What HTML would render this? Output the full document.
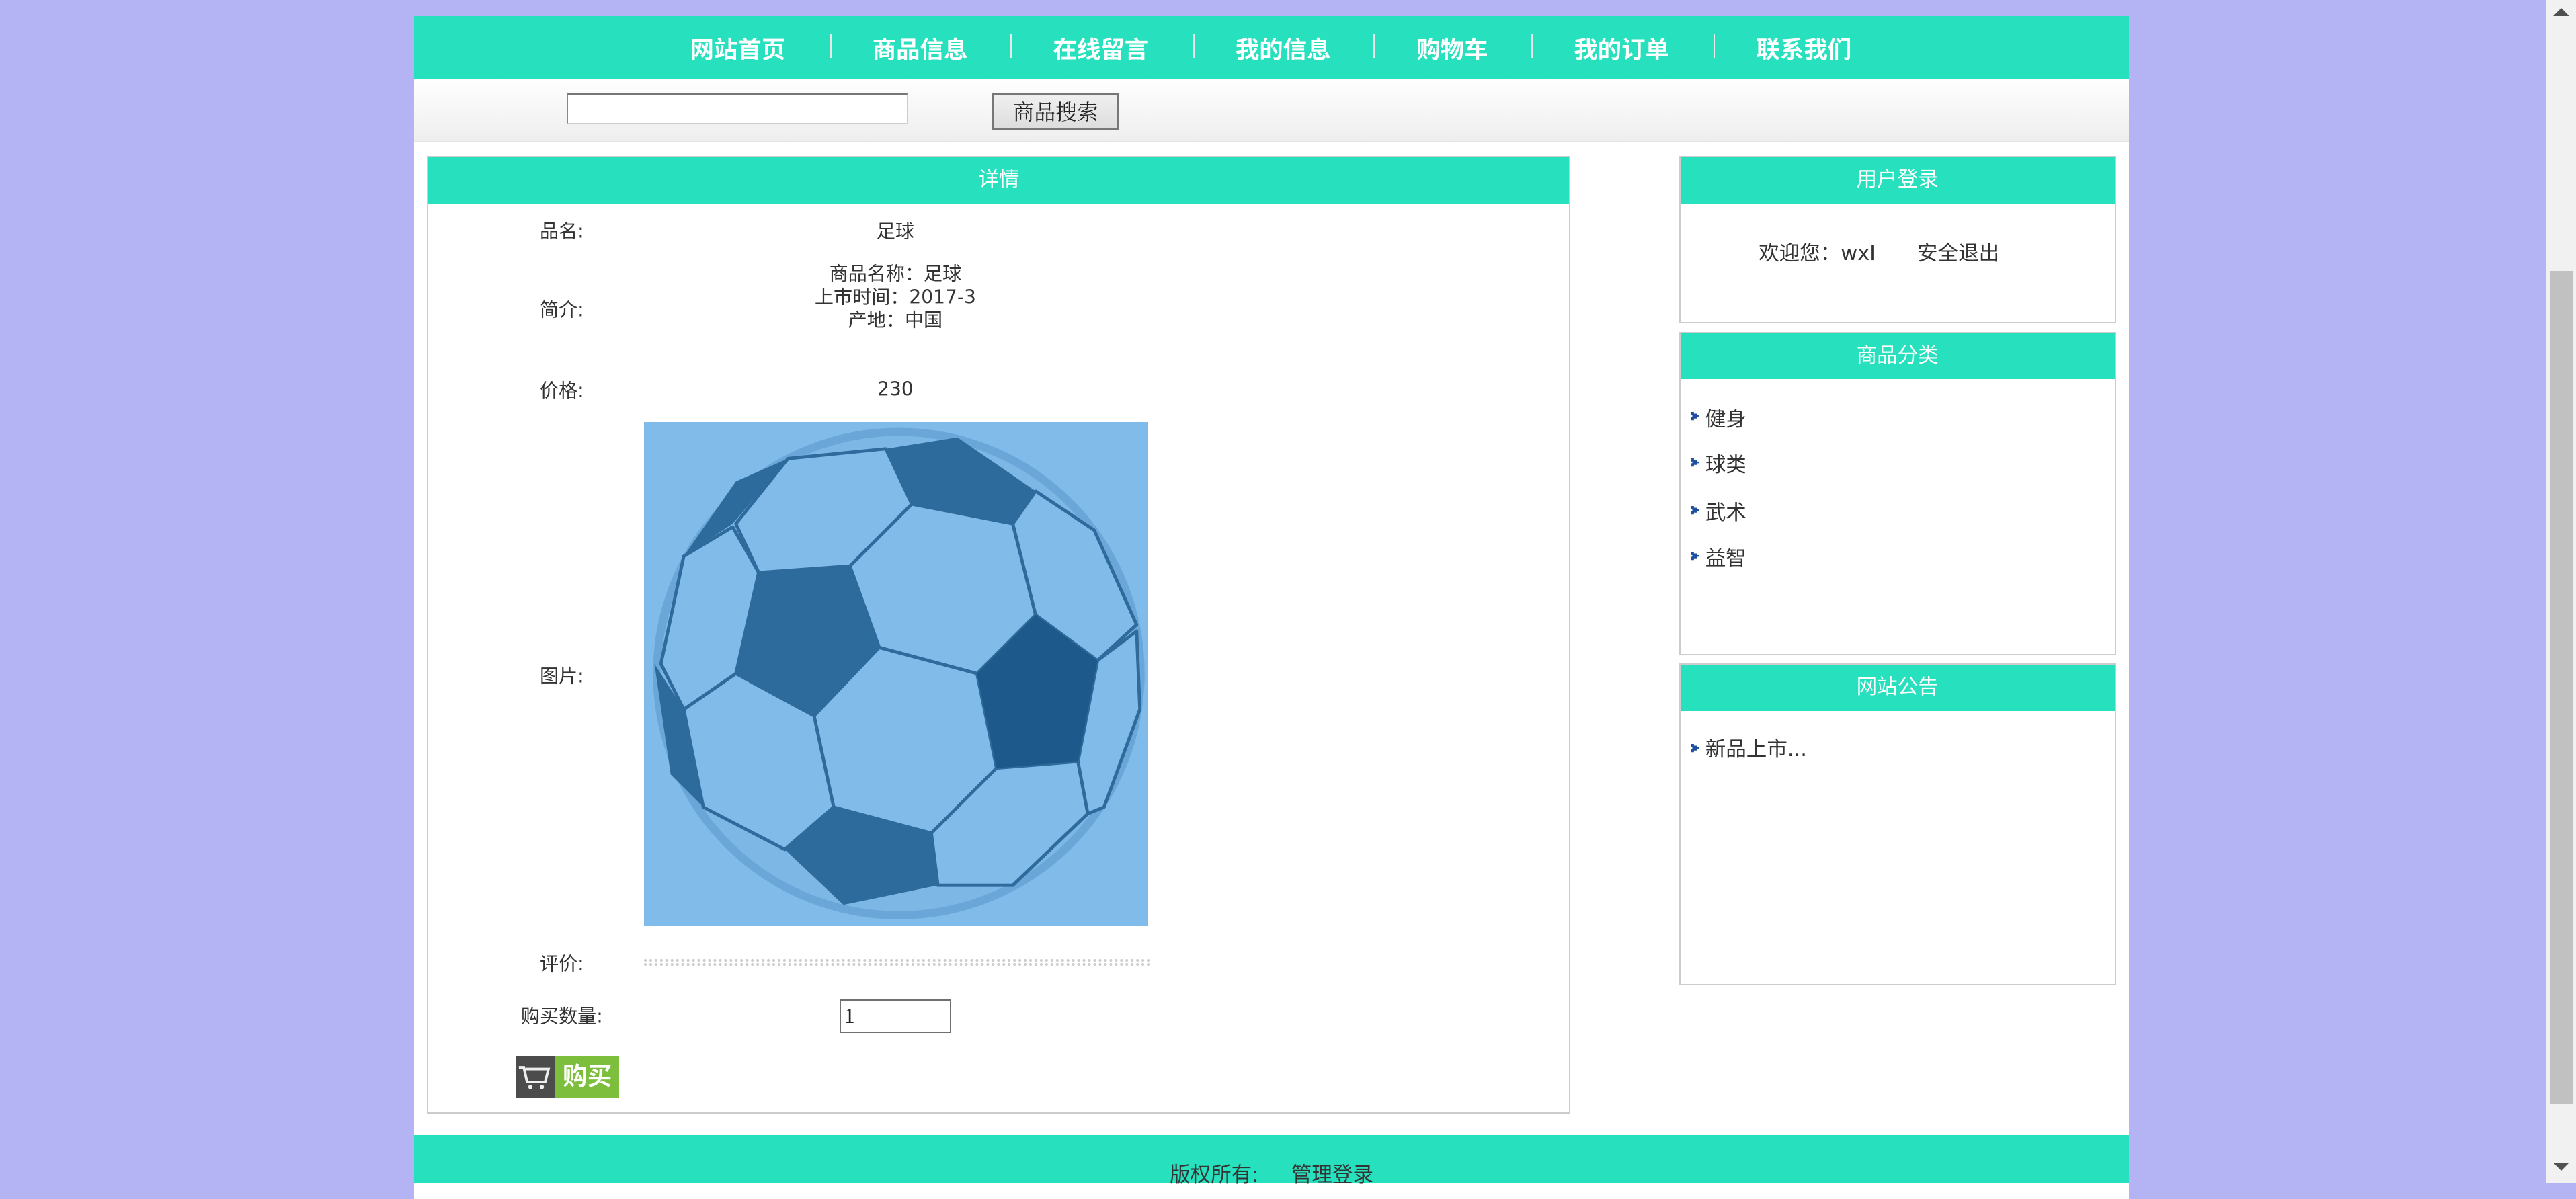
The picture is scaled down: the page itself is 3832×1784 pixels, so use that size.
<!DOCTYPE html>
<html><head><meta charset="utf-8"><style>
html,body{margin:0;padding:0}
body{width:1568px;height:720px;zoom:2.44388;background:#b4b4f4;position:relative;overflow:hidden;font-family:"DejaVu Sans","Noto Sans CJK SC",sans-serif;font-size:11.5px;color:#333}
.a{position:absolute}
#wrap{left:252px;top:10px;width:1044px;height:720px;background:#fff}
#nav{left:252px;top:10px;width:1044px;height:38px;background:#27e0bd}
.ni{top:19px;color:#fff;font-weight:bold;font-size:14.5px;transform:translateX(-50%);white-space:nowrap}
.sep{top:21px;width:1px;height:14px;background:#e8e8e8}
#sb{left:252px;top:48px;width:1044px;height:38px;background:linear-gradient(#fff,#eee);border-bottom:1px solid #e4e4e4}
.panel{border:1px solid #ccc;box-sizing:border-box;background:#fff}
.hd{left:0;top:0;right:0;height:28px;background:#27e0bd;color:#fff;text-align:center;line-height:28px;font-size:12.5px}
.c{transform:translate(-50%,-50%);white-space:nowrap}
.li{font-size:12.5px;color:#333}
</style></head><body>
<div class="a" id="wrap"></div>
<div class="a" id="nav"></div>
<div class="a ni" style="left:449px">网站首页</div>
<div class="a sep" style="left:505px"></div>
<div class="a ni" style="left:560px">商品信息</div>
<div class="a sep" style="left:615px"></div>
<div class="a ni" style="left:670px">在线留言</div>
<div class="a sep" style="left:726px"></div>
<div class="a ni" style="left:781px">我的信息</div>
<div class="a sep" style="left:836px"></div>
<div class="a ni" style="left:884px">购物车</div>
<div class="a sep" style="left:932px"></div>
<div class="a ni" style="left:987px">我的订单</div>
<div class="a sep" style="left:1043px"></div>
<div class="a ni" style="left:1098px">联系我们</div>
<div class="a" id="sb"></div>
<div class="a" style="left:345px;top:57px;width:206px;height:17px;background:#fff;border:1px solid #ccc;border-top-color:#777;border-left-color:#888"></div>
<div class="a" style="left:604px;top:57px;width:77px;height:22px;background:linear-gradient(#f0f0f0,#ddd);border:1px solid #777;box-sizing:border-box;font-family:'Noto Serif CJK SC',serif;font-size:13px;text-align:center;line-height:20px;color:#222">商品搜索</div>

<div class="a panel" style="left:260px;top:95px;width:696px;height:583px">
<div class="a hd">详情</div></div>
<div class="a c" style="left:342px;top:140px">品名:</div>
<div class="a c" style="left:545px;top:140px">足球</div>
<div class="a c" style="left:342px;top:188px">简介:</div>
<div class="a c" style="left:545px;top:181px;text-align:center;line-height:14px">商品名称：足球<br>上市时间：2017-3<br>产地：中国</div>
<div class="a c" style="left:342px;top:237px">价格:</div>
<div class="a c" style="left:545px;top:237px">230</div>
<div class="a c" style="left:342px;top:411px">图片:</div>
<svg class="a" style="left:392px;top:257px" width="307" height="307" viewBox="18 18 1548 1548">
<rect x="0" y="0" width="2300" height="2300" fill="#80bbea"/>
<circle cx="800" cy="790" r="742" fill="#7db7e6"/>
<circle cx="800" cy="790" r="742" fill="none" stroke="#6aa6d8" stroke-width="25"/>
<g fill="#80bbea" stroke="#2f6a9c" stroke-width="10" stroke-linejoin="round">
<polygon points="300,330 460,130 760,100 840,270 650,460 370,480"/>
<polygon points="650,460 840,270 1150,330 1220,610 1040,790 740,710"/>
<polygon points="540,920 740,710 1040,790 1100,1080 900,1280 600,1200"/>
<polygon points="140,900 300,790 540,920 600,1200 450,1330 200,1200"/>
<polygon points="70,760 140,430 290,340 370,480 300,790 140,900"/>
<polygon points="1150,330 1220,230 1400,350 1530,640 1410,750 1220,610"/>
<polygon points="900,1280 1100,1080 1350,1060 1380,1220 1150,1440 920,1440"/>
<polygon points="1410,750 1530,660 1540,900 1430,1200 1380,1220 1350,1060"/>
</g>
<g fill="#2d6b9d">
<polygon points="760,100 980,65 1220,230 1150,330 840,270"/>
<polygon points="370,480 650,460 740,710 540,920 300,790"/>
<polygon points="450,1330 600,1200 900,1280 920,1440 630,1500"/>
<polygon points="50,760 140,900 200,1200 100,1100"/>
<polygon points="140,430 290,330 460,130 300,200"/>
</g>
<polygon fill="#1d5a8b" points="1040,790 1220,610 1410,750 1350,1060 1100,1080"/>
</svg>
<div class="a c" style="left:342px;top:586px">评价:</div>
<div class="a" style="left:392px;top:584px;width:308px;height:4px;border-top:2px dotted #ccc;border-bottom:2px dotted #ccc;box-sizing:border-box"></div>
<div class="a c" style="left:342px;top:618px">购买数量:</div>
<div class="a" style="left:511px;top:608px;width:68px;height:21px;border:1px solid #707070;border-top-width:2px;box-sizing:border-box;font-family:'Liberation Serif',serif;font-size:13px;line-height:18px;padding-left:2px;color:#222">1</div>
<div class="a" style="left:314px;top:643px;width:24px;height:25px;background:#4c4c4c"></div>
<svg class="a" style="left:314px;top:643px" width="24" height="25" viewBox="0 0 24 25"><path d="M2 7h3l2 9h11l2-8H6" fill="none" stroke="#eee" stroke-width="1.6"/><circle cx="9" cy="19" r="1.3" fill="#eee"/><circle cx="16" cy="19" r="1.3" fill="#eee"/></svg>
<div class="a" style="left:338px;top:643px;width:39px;height:25px;background:#7dbf3c;color:#fff;font-weight:bold;font-size:15px;line-height:25px;text-align:center">购买</div>

<div class="a panel" style="left:1022px;top:95px;width:266px;height:102px"><div class="a hd">用户登录</div></div>
<div class="a c li" style="left:1106px;top:153px">欢迎您：wxl</div>
<div class="a c li" style="left:1192px;top:153px">安全退出</div>

<div class="a panel" style="left:1022px;top:202px;width:266px;height:197px"><div class="a hd">商品分类</div></div>
<div class="a panel" style="left:1022px;top:404px;width:266px;height:196px"><div class="a hd">网站公告</div></div>
<svg width="0" height="0" style="position:absolute"><defs><path id="b" d="M0 0h2v1h2v1h1v1h-1v1h-2v1h-2v-2h1v-1h-1z" fill="#1f4fa0"/></defs></svg>
<svg class="a" style="left:1029px;top:251px" width="6" height="6"><use href="#b"/></svg>
<div class="a li" style="left:1038px;top:245px">健身</div>
<svg class="a" style="left:1029px;top:279px" width="6" height="6"><use href="#b"/></svg>
<div class="a li" style="left:1038px;top:273px">球类</div>
<svg class="a" style="left:1029px;top:308px" width="6" height="6"><use href="#b"/></svg>
<div class="a li" style="left:1038px;top:302px">武术</div>
<svg class="a" style="left:1029px;top:336px" width="6" height="6"><use href="#b"/></svg>
<div class="a li" style="left:1038px;top:330px">益智</div>
<svg class="a" style="left:1029px;top:453px" width="6" height="6"><use href="#b"/></svg>
<div class="a li" style="left:1038px;top:446px">新品上市...</div>

<div class="a" style="left:252px;top:691px;width:1044px;height:29px;background:#27e0bd"></div>
<div class="a li" style="left:712px;top:705px">版权所有:</div>
<div class="a li" style="left:786px;top:705px">管理登录</div>

<div class="a" style="left:1550px;top:0;width:18px;height:720px;background:#f1f1f1"></div>
<div class="a" style="left:1552px;top:165px;width:14px;height:507px;background:#c1c1c1"></div>
<div class="a" style="left:1554px;top:5px;width:0;height:0;border-left:5px solid transparent;border-right:5px solid transparent;border-bottom:5px solid #505050"></div>
<div class="a" style="left:1554px;top:708px;width:0;height:0;border-left:5px solid transparent;border-right:5px solid transparent;border-top:5px solid #505050"></div>
</body></html>
